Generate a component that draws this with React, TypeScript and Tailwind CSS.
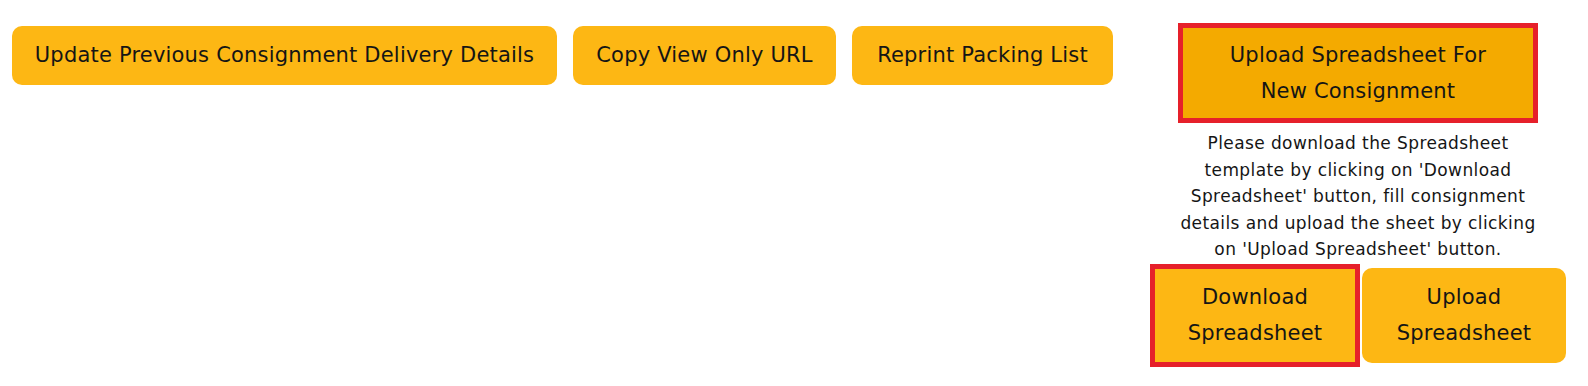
const font = { fontFamily: '"DejaVu Sans", "Liberation Sans", sans-serif' };

function TopButton({ label, width }: { label: string; width: string }) {
  return (
    <button
      type="button"
      className={`h-[59px] ${width} shrink-0 rounded-[10px] bg-[#fdb714] text-center text-[21px] tracking-[0.2px] text-[#151515]`}
    >
      {label}
    </button>
  );
}

export default function App() {
  return (
    <div className="flex h-[386px] w-[1588px] items-start bg-white pl-[12px] pt-[23px]" style={font}>
      <div className="mt-[3px] flex gap-[16px]">
        <TopButton label="Update Previous Consignment Delivery Details" width="w-[545px]" />
        <TopButton label="Copy View Only URL" width="w-[263px]" />
        <TopButton label="Reprint Packing List" width="w-[261px]" />
      </div>

      <div className="ml-[37px] flex w-[416px] flex-col items-center">
        <button
          type="button"
          className="h-[100px] w-[360px] border-[5px] border-[#e6202a] bg-[#f4aa00] text-[21px] leading-[36px] tracking-[0.2px] text-[#151515]"
        >
          Upload Spreadsheet For
          <br />
          New Consignment
        </button>

        <p className="mt-[7px] w-[400px] text-center text-[17px] leading-[26.6px] tracking-[0.4px] text-[#151515]">
          Please download the Spreadsheet
          <br />
          template by clicking on 'Download
          <br />
          Spreadsheet' button, fill consignment
          <br />
          details and upload the sheet by clicking
          <br />
          on 'Upload Spreadsheet' button.
        </p>

        <div className="mt-px flex w-full items-center gap-[2px]">
          <button
            type="button"
            className="h-[103px] w-[210px] border-[5px] border-[#e6202a] bg-[#fdb714] text-[21px] leading-[36px] tracking-[0.2px] text-[#151515]"
          >
            Download
            <br />
            Spreadsheet
          </button>
          <button
            type="button"
            className="h-[95px] w-[204px] rounded-[10px] bg-[#fdb714] text-[21px] leading-[36px] tracking-[0.2px] text-[#151515]"
          >
            Upload
            <br />
            Spreadsheet
          </button>
        </div>
      </div>
    </div>
  );
}
